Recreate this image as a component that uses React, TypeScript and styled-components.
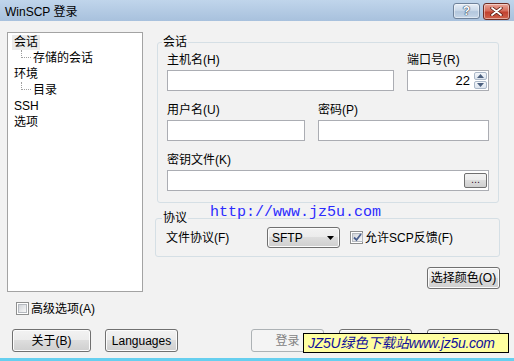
import React from "react";
import styled, { createGlobalStyle } from "styled-components";

const GlobalStyle = createGlobalStyle`
  html, body { margin: 0; padding: 0; }
  body {
    background: #f2f2f2;
    font-family: "Liberation Sans", "Noto Sans CJK SC", sans-serif;
    font-size: 12px;
    color: #000;
  }
  *, *::before, *::after { box-sizing: border-box; }
`;

const Window = styled.div`
  position: relative;
  width: 514px;
  height: 361px;
  display: flex;
  flex-direction: column;
  background: #f2f2f2;
  border-bottom: 3px solid #66cfef;
  overflow: hidden;
`;

const TitleBar = styled.div`
  flex: none;
  height: 21px;
  display: flex;
  align-items: flex-start;
  justify-content: space-between;
  padding: 0 4px 0 5px;
  background: linear-gradient(#c0d5eb, #a8c1dd);
`;

const Title = styled.div`
  font-size: 12px;
  line-height: 16px;
  padding-top: 4px;
`;

const CaptionGroup = styled.div`
  display: flex;
  gap: 3px;
  padding-top: 3px;
`;

const CaptionButton = styled.div<{ $close?: boolean }>`
  width: 27px;
  height: ${(p) => (p.$close ? 17 : 16)}px;
  border: 1px solid ${(p) => (p.$close ? "#6e2d25" : "#6f829a")};
  border-radius: 3px;
  background: ${(p) =>
    p.$close
      ? "linear-gradient(#e9a699, #d66d5c 45%, #c2412f 55%, #cf634d)"
      : "linear-gradient(#e6eef7, #cbd9e9 45%, #b3c7dd 55%, #c6d6e8)"};
  box-shadow: inset 0 0 0 1px rgba(255, 255, 255, 0.45);
  display: flex;
  align-items: center;
  justify-content: center;
  color: #fff;
  font-weight: bold;
  font-size: 12px;
  line-height: 12px;
  text-shadow: 0 0 1px #2c3e55, 0 0 1px #2c3e55, 0 0 1px #2c3e55;
`;

const Body = styled.div`
  flex: 1;
  display: flex;
  flex-direction: column;
  padding: 11px 14px 0 7px;
`;

const Main = styled.div`
  display: flex;
  gap: 12px;
`;

const Tree = styled.div`
  flex: none;
  width: 136px;
  height: 260px;
  background: #fff;
  border: 1px solid #a3a3a3;
  padding: 1px 0 0 4px;
`;

const TreeRow = styled.div`
  display: flex;
  align-items: center;
  height: 16px;
`;

const TreeLabel = styled.span<{ $selected?: boolean }>`
  padding: 0 2px;
  line-height: 15px;
  height: 15px;
  background: ${(p) => (p.$selected ? "#ebebeb" : "transparent")};
`;

const Connector = styled.span`
  align-self: flex-start;
  width: 10px;
  height: 8px;
  margin-left: 9px;
  border-left: 1px dotted #a0a0a0;
  border-bottom: 1px dotted #a0a0a0;
`;

const RightCol = styled.div`
  width: 345px;
  display: flex;
  flex-direction: column;
`;

const Group = styled.div`
  position: relative;
  border: 1px solid #d5dfe5;
  border-radius: 3px;
`;

const SessionGroup = styled(Group)`
  margin: 10px 1px 0 2px;
  padding: 9px 9px 11px 9px;
`;

const ProtocolGroup = styled(Group)`
  margin-top: 15px;
  padding: 8px 9px 8px 10px;
  display: flex;
  align-items: center;
`;

const Legend = styled.span<{ $left: number }>`
  position: absolute;
  top: -9px;
  left: ${(p) => p.$left}px;
  padding: 0 1px;
  line-height: 16px;
  background: #f2f2f2;
`;

const FieldRow = styled.div<{ $cols: string }>`
  display: grid;
  grid-template-columns: ${(p) => p.$cols};
  column-gap: 13px;
  & + & { margin-top: 11px; }
`;

const Field = styled.div`
  display: flex;
  flex-direction: column;
  gap: 2px;
`;

const Label = styled.span`
  line-height: 16px;
  height: 16px;
  white-space: nowrap;
`;

const Box = styled.div`
  height: 21px;
  background: #fff;
  border: 1px solid #abadb3;
  display: flex;
`;

const PortBox = styled(Box)`
  justify-content: flex-end;
  align-items: stretch;
`;

const PortValue = styled.span`
  align-self: center;
  line-height: 16px;
  font-size: 13px;
`;

const Spinner = styled.div`
  width: 13px;
  margin: 1px 1px 1px 4px;
  display: flex;
  flex-direction: column;
  gap: 1px;
`;

const SpinButton = styled.div`
  flex: 1;
  border: 1px solid #abb8c8;
  border-radius: 2px;
  background: linear-gradient(#f4f7fb, #dce4ee);
  display: flex;
  align-items: center;
  justify-content: center;
`;

const KeyBox = styled(Box)`
  justify-content: flex-end;
  align-items: flex-start;
  padding: 2px 1px 0 0;
`;

const BrowseButton = styled.div`
  width: 23px;
  height: 15px;
  border: 1px solid #707070;
  border-radius: 2px;
  background: linear-gradient(#f2f2f2, #ebebeb 50%, #dddddd 50%, #cfcfcf);
  font-size: 11px;
  line-height: 11px;
  text-align: center;
  color: #3a1030;
`;

const ProtoLabel = styled.span`
  width: 101px;
  line-height: 16px;
`;

const Select = styled.div`
  width: 73px;
  height: 21px;
  border: 1px solid #707070;
  border-radius: 3px;
  background: linear-gradient(#f2f2f2, #ebebeb 50%, #dddddd 50%, #cfcfcf);
  box-shadow: inset 0 0 0 1px #fcfcfc;
  display: flex;
  align-items: center;
  justify-content: space-between;
  padding: 0 5px 0 4px;
  line-height: 16px;
`;

const CheckRow = styled.label<{ $ml?: number }>`
  display: flex;
  align-items: center;
  gap: 2px;
  margin-left: ${(p) => p.$ml ?? 0}px;
  line-height: 16px;
  white-space: nowrap;
`;

const CheckOuter = styled.span`
  flex: none;
  width: 13px;
  height: 13px;
  border: 1px solid #8e8f8f;
  background: #fff;
  padding: 1px;
  display: flex;
`;

const CheckInner = styled.span`
  flex: 1;
  border: 1px solid #b5b9bf;
  background: linear-gradient(135deg, #d2d5da, #f7f7f7);
  display: flex;
  align-items: center;
  justify-content: center;
`;

const Button = styled.div<{ $w: number; $h?: number; $disabled?: boolean }>`
  width: ${(p) => p.$w}px;
  height: ${(p) => p.$h ?? 23}px;
  border: 1px solid ${(p) => (p.$disabled ? "#adb2b5" : "#707070")};
  border-radius: 3px;
  background: ${(p) =>
    p.$disabled
      ? "#f4f4f4"
      : "linear-gradient(#f2f2f2, #ebebeb 50%, #dddddd 50%, #cfcfcf)"};
  box-shadow: inset 0 0 0 1px ${(p) => (p.$disabled ? "#f4f4f4" : "#fcfcfc")};
  color: ${(p) => (p.$disabled ? "#838383" : "#000")};
  display: flex;
  align-items: center;
  justify-content: center;
  line-height: 16px;
  white-space: nowrap;
`;

const ColorButton = styled(Button)`
  align-self: flex-end;
  margin-top: 10px;
`;

const AdvancedRow = styled(CheckRow)`
  margin: 10px 0 0 9px;
  height: 13px;
`;

const ButtonBar = styled.div`
  margin-top: 14px;
  display: flex;
  justify-content: space-between;
  padding-left: 5px;
`;

const ButtonGroup = styled.div<{ $gap: number }>`
  display: flex;
  gap: ${(p) => p.$gap}px;
`;

const UrlMark = styled.div`
  position: absolute;
  left: 210px;
  top: 205px;
  font-family: "Liberation Mono", monospace;
  font-size: 15px;
  line-height: 16px;
  color: #2b2bff;
  white-space: nowrap;
`;

const Stamp = styled.div`
  position: absolute;
  left: 303px;
  top: 333px;
  width: 206px;
  height: 20px;
  background: #ffffa0;
  border: 1px solid #000;
  padding-left: 4px;
  font-style: italic;
  font-size: 14px;
  letter-spacing: -0.3px;
  line-height: 18px;
  color: #10109a;
  white-space: nowrap;
  overflow: hidden;
`;

const Arrow = ({ up, color = "#4c607f" }: { up?: boolean; color?: string }) => (
  <svg width="7" height="4" viewBox="0 0 7 4">
    <path d={up ? "M0 4 L3.5 0 L7 4 Z" : "M0 0 L7 0 L3.5 4 Z"} fill={color} />
  </svg>
);

const Check = ({ checked }: { checked?: boolean }) => (
  <CheckOuter>
    <CheckInner>
      {checked && (
        <svg width="9" height="9" viewBox="0 0 9 9">
          <path d="M1 4.5 L3.5 7 L8 1" fill="none" stroke="#4a5f8e" strokeWidth="1.8" />
        </svg>
      )}
    </CheckInner>
  </CheckOuter>
);

export default function App() {
  return (
    <>
      <GlobalStyle />
      <Window>
        <TitleBar>
          <Title>WinSCP 登录</Title>
          <CaptionGroup>
            <CaptionButton>?</CaptionButton>
            <CaptionButton $close>
              <svg width="13" height="9" viewBox="0 0 13 9">
                <path d="M2 1 L11 8 M11 1 L2 8" stroke="#5a1b12" strokeWidth="3.4" strokeLinecap="round" />
                <path d="M2 1 L11 8 M11 1 L2 8" stroke="#fff" strokeWidth="1.8" strokeLinecap="round" />
              </svg>
            </CaptionButton>
          </CaptionGroup>
        </TitleBar>
        <Body>
          <Main>
            <Tree>
              <TreeRow>
                <TreeLabel $selected>会话</TreeLabel>
              </TreeRow>
              <TreeRow>
                <Connector />
                <TreeLabel>存储的会话</TreeLabel>
              </TreeRow>
              <TreeRow>
                <TreeLabel>环境</TreeLabel>
              </TreeRow>
              <TreeRow>
                <Connector />
                <TreeLabel>目录</TreeLabel>
              </TreeRow>
              <TreeRow>
                <TreeLabel>SSH</TreeLabel>
              </TreeRow>
              <TreeRow>
                <TreeLabel>选项</TreeLabel>
              </TreeRow>
            </Tree>
            <RightCol>
              <SessionGroup>
                <Legend $left={4}>会话</Legend>
                <FieldRow $cols="227px 82px">
                  <Field>
                    <Label>主机名(H)</Label>
                    <Box />
                  </Field>
                  <Field>
                    <Label>端口号(R)</Label>
                    <PortBox>
                      <PortValue>22</PortValue>
                      <Spinner>
                        <SpinButton>
                          <Arrow up />
                        </SpinButton>
                        <SpinButton>
                          <Arrow />
                        </SpinButton>
                      </Spinner>
                    </PortBox>
                  </Field>
                </FieldRow>
                <FieldRow $cols="138px 1fr">
                  <Field>
                    <Label>用户名(U)</Label>
                    <Box />
                  </Field>
                  <Field>
                    <Label>密码(P)</Label>
                    <Box />
                  </Field>
                </FieldRow>
                <FieldRow $cols="1fr">
                  <Field>
                    <Label>密钥文件(K)</Label>
                    <KeyBox>
                      <BrowseButton>...</BrowseButton>
                    </KeyBox>
                  </Field>
                </FieldRow>
              </SessionGroup>
              <ProtocolGroup>
                <Legend $left={6}>协议</Legend>
                <ProtoLabel>文件协议(F)</ProtoLabel>
                <Select>
                  <span>SFTP</span>
                  <Arrow color="#000" />
                </Select>
                <CheckRow $ml={10}>
                  <Check checked />
                  <span>允许SCP反馈(F)</span>
                </CheckRow>
              </ProtocolGroup>
              <ColorButton $w={73} $h={22}>选择颜色(O)</ColorButton>
            </RightCol>
          </Main>
          <AdvancedRow>
            <Check />
            <span>高级选项(A)</span>
          </AdvancedRow>
          <ButtonBar>
            <ButtonGroup $gap={14}>
              <Button $w={79}>关于(B)</Button>
              <Button $w={73}>Languages</Button>
            </ButtonGroup>
            <ButtonGroup $gap={15}>
              <Button $w={73} $disabled>登录</Button>
              <Button $w={73}>保存(S)</Button>
              <Button $w={73}>关闭</Button>
            </ButtonGroup>
          </ButtonBar>
        </Body>
        <UrlMark>http://www.jz5u.com</UrlMark>
        <Stamp>JZ5U绿色下载站www.jz5u.com</Stamp>
      </Window>
    </>
  );
}
